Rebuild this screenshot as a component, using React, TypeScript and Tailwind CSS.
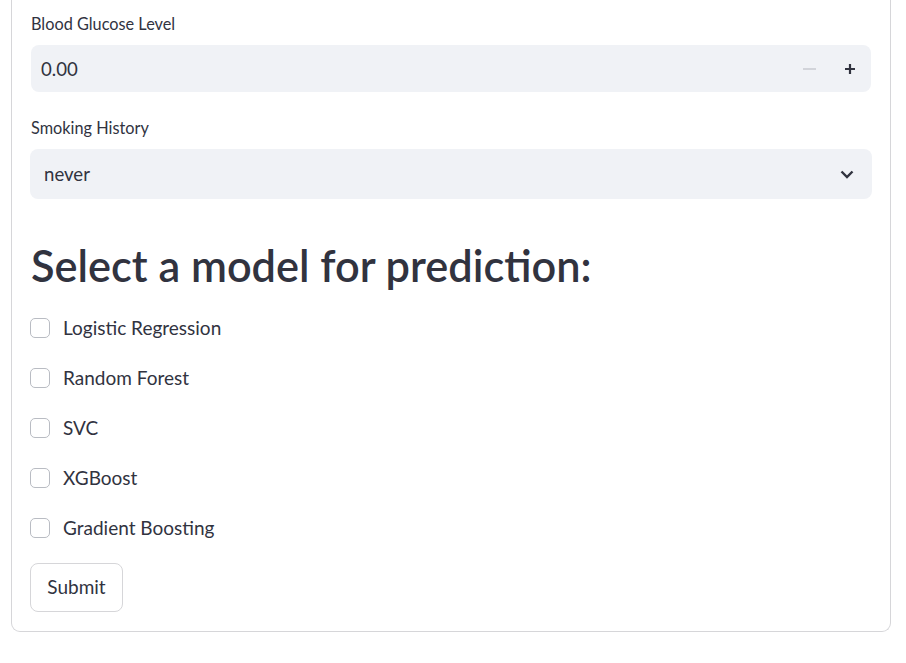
import React from "react";

const models = ["Logistic Regression", "Random Forest", "SVC", "XGBoost", "Gradient Boosting"];

export default function App() {
  return (
    <div className="w-[906px] h-[663px] bg-white overflow-hidden text-[#31333f]" style={{ fontFamily: '"Source Sans Pro", Lato, "Noto Sans", sans-serif' }}>
      <div className="px-[11px] w-[902px]">
        <div className="border border-t-0 border-[#d6d6d9] rounded-b-[9px] px-[19px] pb-[19px]">
          <div className="h-[45px] pt-[13px] text-[16.3px] leading-[22px]">Blood Glucose Level</div>
          <div className="h-[47px] rounded-[8px] bg-[#f0f2f6] flex items-center pl-[10px] pr-[13px]">
            <span className="text-[18.6px] flex-1 pt-[2px]">0.00</span>
            <span className="w-[13px] h-[2px] bg-[#d2d4da] mr-[28px]"></span>
            <svg width="12" height="12" viewBox="0 0 12 12" className="mr-[2px]"><path d="M6 1v10M1 6h10" stroke="#31333f" strokeWidth="2.2" /></svg>
          </div>
          <div className="h-[57px] pt-[25px] text-[16.3px] leading-[22px]">Smoking History</div>
          <div className="h-[50px] rounded-[8px] bg-[#f0f2f6] flex items-center pl-[14px] pr-[18px] -mx-[1px]">
            <span className="text-[18.6px] flex-1 pt-[1px]">never</span>
            <svg width="14" height="9" viewBox="0 0 14 9"><path d="M1.5 1.5l5.5 5.5 5.5-5.5" fill="none" stroke="#31333f" strokeWidth="2.4" /></svg>
          </div>
          <div className="h-[104px] pt-[38px] text-[43.3px] leading-[56px] font-semibold">Select a model for prediction:</div>
          <div className="flex flex-col">
            {models.map((m) => (
              <div key={m} className="h-[50px] flex items-center">
                <span className="w-[20px] h-[20px] rounded-[5px] border border-[#b9bcc3] bg-white -ml-[1px]"></span>
                <span className="ml-[13px] text-[19px] pt-[1px]">{m}</span>
              </div>
            ))}
          </div>
          <div className="pt-[10px]">
            <button className="h-[49px] w-[93px] -ml-[1px] rounded-[8px] border border-[#d6d6d9] bg-white text-[19px]">Submit</button>
          </div>
        </div>
      </div>
    </div>
  );
}
